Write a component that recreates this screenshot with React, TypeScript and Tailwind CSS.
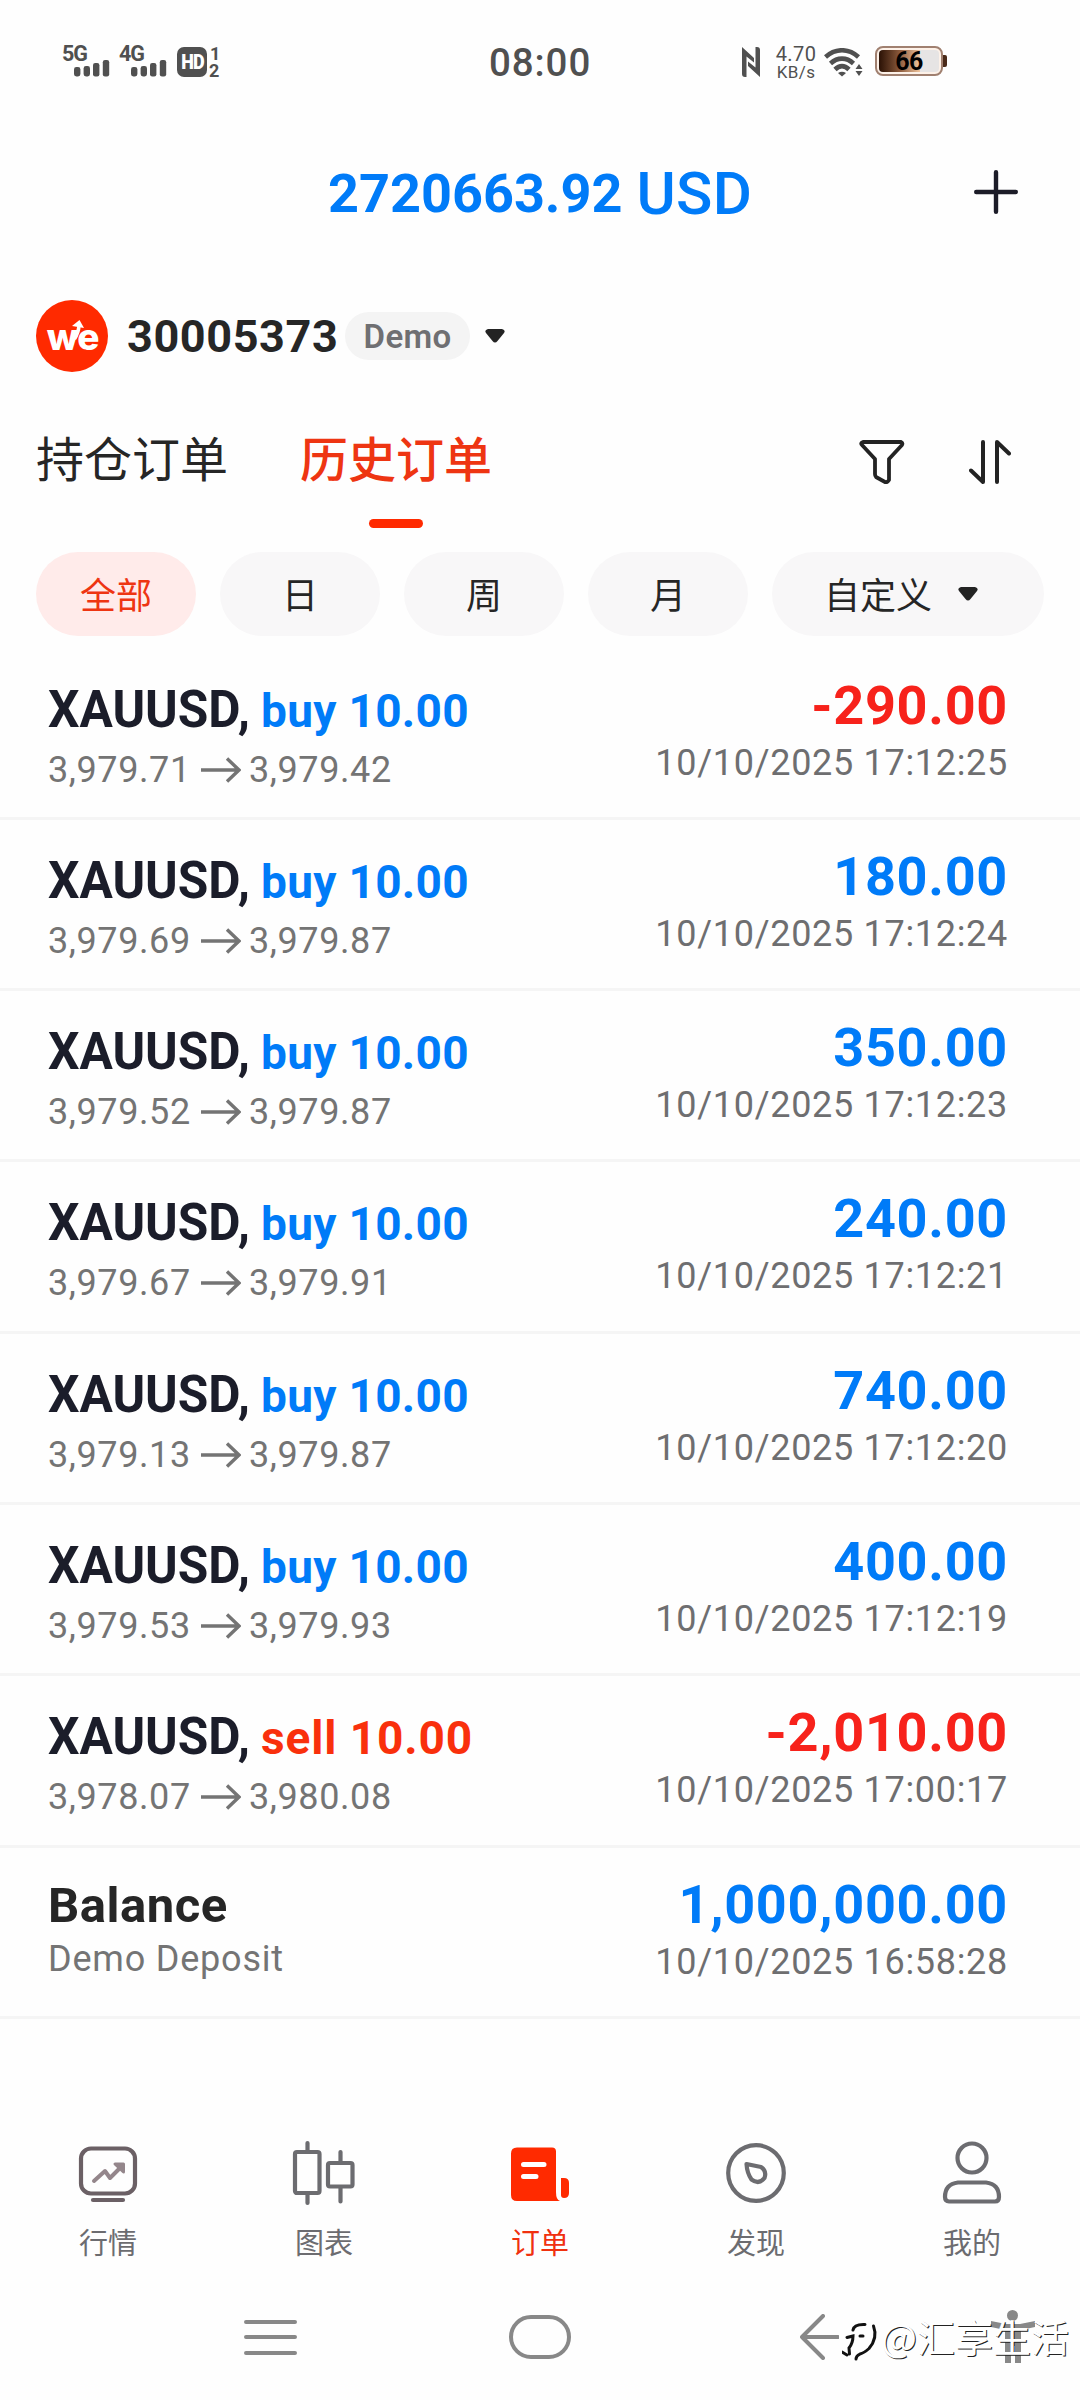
import type { ReactNode } from "react";

const latin = "font-[Roboto,'Noto_Sans_CJK_SC',sans-serif]";
const cjk = "font-['Noto_Sans_CJK_SC',sans-serif]";

type Order = {
  kind?: "buy" | "sell";
  from?: string;
  to?: string;
  profit: string;
  time: string;
};

const orders: Order[] = [
  { kind: "buy", from: "3,979.71", to: "3,979.42", profit: "-290.00", time: "10/10/2025 17:12:25" },
  { kind: "buy", from: "3,979.69", to: "3,979.87", profit: "180.00", time: "10/10/2025 17:12:24" },
  { kind: "buy", from: "3,979.52", to: "3,979.87", profit: "350.00", time: "10/10/2025 17:12:23" },
  { kind: "buy", from: "3,979.67", to: "3,979.91", profit: "240.00", time: "10/10/2025 17:12:21" },
  { kind: "buy", from: "3,979.13", to: "3,979.87", profit: "740.00", time: "10/10/2025 17:12:20" },
  { kind: "buy", from: "3,979.53", to: "3,979.93", profit: "400.00", time: "10/10/2025 17:12:19" },
  { kind: "sell", from: "3,978.07", to: "3,980.08", profit: "-2,010.00", time: "10/10/2025 17:00:17" },
  { profit: "1,000,000.00", time: "10/10/2025 16:58:28" },
];

function Signal({ label }: { label: string }) {
  return (
    <div className="flex w-[57px] flex-col">
      <span className="h-[15px] text-[21.5px] leading-[18px] font-bold tracking-[-1px]">{label}</span>
      <svg className="ml-[12px]" width="36" height="17" viewBox="0 0 36 17" fill="#505050">
        <rect x="0" y="7" width="6.4" height="9.5" rx="2.4" />
        <rect x="9.6" y="6" width="6.4" height="10.5" rx="2.4" />
        <rect x="19" y="3" width="6.4" height="13.5" rx="2.2" />
        <rect x="28.8" y="0" width="6.4" height="16.5" rx="2.2" />
      </svg>
    </div>
  );
}

function StatusBar() {
  return (
    <div className="flex h-[120px] items-start px-[62px] pt-[45px] text-[#505050]">
      <div className="flex w-[427px] items-start">
        <Signal label="5G" />
        <Signal label="4G" />
        <div className="mt-[2px] ml-[1px] flex h-[30px] w-[30px] items-center justify-center rounded-[7px] bg-[#505050] text-[20px] leading-none font-black tracking-[-1px] text-white">
          <span className="inline-block scale-x-90">HD</span>
        </div>
        <div className="ml-[2px] flex flex-col text-[18px] leading-[17px] font-bold">
          <span className="pl-[1px]">1</span>
          <span>2</span>
        </div>
      </div>
      <div className="mt-[-3px] text-[38.5px] leading-[42px] font-medium tracking-[0.9px]">08:00</div>
      <div className="ml-auto flex w-[338px] items-start">
        <svg className="mt-[2px] ml-[61px]" width="20" height="30" viewBox="0 0 20 30" fill="#505050">
          <path d="M1 0 13 11V15.500L5.500 9.500V30H4Q1 30 1 27Z" />
          <path d="M19 30 7 19V14.500L14.500 20.500V0H16Q19 0 19 3Z" />
        </svg>
        <div className="ml-[14px] flex w-[42px] flex-col items-center leading-[16px]">
          <span className="mt-[1px] text-[20px] tracking-[0.4px]">4.70</span>
          <span className="mt-[2px] text-[17px] tracking-[0.4px]">KB/s</span>
        </div>
        <svg className="mt-[3px] ml-[7px]" width="40" height="29" viewBox="0 0 40 29" fill="none" stroke="#505050" strokeWidth="4.600">
          <path d="M1.500 9C11.500 0 24.500 0 34.500 9" />
          <path d="M6.500 15.500C13.500 9 22.500 9 29.500 15.500" />
          <path d="M11 21.500C15.500 17 20.500 17 25 21.500" />
          <path d="M18 28.500 14 25Q18 22.500 22 25Z" fill="#505050" stroke="none" />
          <path d="M35 16 38.500 21H31.500ZM35 28 38.500 23H31.500Z" fill="#505050" stroke="none" />
        </svg>
        <div className="mt-[1px] ml-[11px] flex items-center">
          <div className="relative h-[30px] w-[68px] rounded-[8px] border-2 border-[#a08070] bg-[#fdf1e8] p-[2px]">
            <div className="flex h-full w-full overflow-hidden rounded-[4px] bg-[#e6e4e4]">
              <div className="w-[41px] bg-linear-to-r from-[#2b1206] via-[#8b5a3c] to-[#f1c69f]" />
            </div>
            <span className="absolute inset-0 flex items-center justify-center text-[25px] leading-none font-bold tracking-[-0.5px] text-black">66</span>
          </div>
          <div className="h-[12px] w-[4px] rounded-r-[2px] bg-[#4a2a1a]" />
        </div>
      </div>
    </div>
  );
}

function Header() {
  return (
    <header className="flex h-[144px] items-center justify-between pr-[62px] pl-[328px]">
      <div className="flex items-baseline text-[#007bf8]">
        <span className="text-[54px] leading-none font-bold">2720663.92</span>
        <span className="ml-[14px] translate-y-[2px] text-[60px] leading-none font-medium tracking-[0.3px]">USD</span>
      </div>
      <svg width="44" height="44" viewBox="0 0 44 44" stroke="#1c1c28" strokeWidth="4.400" strokeLinecap="round">
        <path d="M22 2.200V41.800M2.200 22H41.800" />
      </svg>
    </header>
  );
}

function Caret() {
  return (
    <svg width="20" height="14" viewBox="0 0 20 14" fill="#232323">
      <path d="M3 0H17Q21 1 19 4L12.500 12Q10 15 7.500 12L1 4Q-1 1 3 0Z" />
    </svg>
  );
}

function Account() {
  return (
    <div className="flex h-[72px] items-center pl-[36px]">
      <div className="relative flex h-[72px] w-[72px] items-center justify-center rounded-full bg-[#ff2a00]">
        <span className="mr-[-1px] text-[37px] leading-none font-extrabold tracking-[-1px] text-white font-[Inter,sans-serif]">we</span>
        <svg className="absolute top-[20px] left-[35px]" width="14" height="20" viewBox="0 0 14 20">
          <path d="M3.500 19Q7.500 13 8 6" stroke="#fff" strokeWidth="3.500" fill="none" />
          <path d="M1 6 8.500 0 13 8Z" fill="#fff" />
        </svg>
      </div>
      <span className="mt-[1px] ml-[19px] w-[218px] text-[45px] leading-none font-bold tracking-[0.6px] text-[#262626]">30005373</span>
      <div className="flex h-[48px] w-[125px] items-center justify-center rounded-full bg-[#f4f4f4] text-[33px] leading-none font-semibold tracking-[0.3px] text-[#6f6f72]">Demo</div>
      <div className="ml-[15px]"><Caret /></div>
    </div>
  );
}

function Tabs() {
  return (
    <nav className={`flex h-[120px] items-start pl-[36px] text-[48px] leading-[54px] ${cjk}`}>
      <div className="mt-[21px] text-[#262626]">持仓订单</div>
      <div className="mt-[21px] ml-[72px] flex flex-col items-center">
        <span className="font-medium text-[#ee3512]">历史订单</span>
        <span className="mt-[36px] h-[9px] w-[54px] rounded-full bg-[#ff2a00]" />
      </div>
      <svg className="mt-[32px] ml-[367px]" width="46" height="44" viewBox="0 0 46 44" fill="none" stroke="#232323" strokeWidth="3.800" strokeLinejoin="round">
        <path d="M4 2H42Q44 3 43 5L30 19V40Q28 43 26 42L17 37Q16 36 16 34V19L3 5Q1 3 4 2Z" />
      </svg>
      <svg className="mt-[32px] ml-[64px]" width="42" height="44" viewBox="0 0 42 44" fill="none" stroke="#232323" strokeWidth="4" strokeLinecap="round" strokeLinejoin="round">
        <path d="M14 2V42L2 30.500M28 42V2L40 13.500" />
      </svg>
    </nav>
  );
}

function Chips() {
  return (
    <div className={`flex h-[84px] gap-[24px] pl-[36px] text-[36px] leading-none text-[#262626] ${cjk}`}>
      <div className="flex w-[160px] items-center justify-center rounded-full bg-[#ffebea] pb-[2px] text-[#ee3512]">全部</div>
      <div className="flex w-[160px] items-center justify-center rounded-full bg-[#f8f7f8] pb-[2px]">日</div>
      <div className="flex w-[160px] items-center justify-center rounded-full bg-[#f8f7f8] pb-[2px]">周</div>
      <div className="flex w-[160px] items-center justify-center rounded-full bg-[#f8f7f8] pb-[2px]">月</div>
      <div className="flex w-[272px] items-center rounded-full bg-[#f8f7f8] pb-[2px] pl-[52px]">
        <span>自定义</span>
        <span className="mt-[2px] ml-[26px]"><Caret /></span>
      </div>
    </div>
  );
}

function OrderRow({ order }: { order: Order }) {
  const loss = order.profit.startsWith("-");
  return (
    <li className="flex h-[171.3px] justify-between border-b-3 border-[#f5f5f5] pr-[72px] pl-[48px]">
      {order.kind ? (
        <div className="pt-[30px]">
          <div className="flex h-[60px] items-baseline leading-[60px] font-bold">
            <span className="inline-block w-[213px] origin-left scale-x-[0.945] text-[52.5px] text-[#1b1d2a]">XAUUSD,</span>
            <span
              className={
                order.kind === "buy"
                  ? "text-[46px] tracking-[0.3px] text-[#007bf8]"
                  : "text-[46px] tracking-[0.9px] text-[#f9300c]"
              }
            >
              {order.kind} 10.00
            </span>
          </div>
          <div className="mt-[10px] flex h-[42px] items-center text-[36px] leading-[42px] tracking-[0.6px] text-[#747474]">
            <span className="w-[153px]">{order.from}</span>
            <svg width="40" height="26" viewBox="0 0 40 26" fill="none" stroke="#747474" strokeWidth="3.400">
              <path d="M0 13H38M26 1.500 38 13 26 24.500" />
            </svg>
            <span className="ml-[8px]">{order.to}</span>
          </div>
        </div>
      ) : (
        <div className="pt-[28px]">
          <div className="text-[49px] leading-[60px] font-bold tracking-[0.5px] text-[#262626]">Balance</div>
          <div className="mt-[2px] text-[36px] leading-[42px] tracking-[0.8px] text-[#747474]">Demo Deposit</div>
        </div>
      )}
      <div className="flex flex-col items-end pt-[27px]">
        <span className={`text-[54px] leading-[60px] font-bold tracking-[0.7px] ${loss ? "text-[#f7221b]" : "text-[#007bf8]"}`}>{order.profit}</span>
        <span className="mt-[6px] text-[36px] leading-[42px] tracking-[0.7px] text-[#6e6e70]">{order.time}</span>
      </div>
    </li>
  );
}

function TabItem({ label, active, children }: { label: string; active?: boolean; children: ReactNode }) {
  return (
    <div className={`flex w-[216px] flex-col items-center ${active ? "text-[#f0310f]" : "text-[#6c6c70]"}`}>
      <svg width="66" height="66" viewBox="0 0 66 66" fill="none" stroke="#6c6c70" strokeWidth="4.200" strokeLinecap="round" strokeLinejoin="round">
        {children}
      </svg>
      <span className={`mt-[17px] text-[29px] leading-[36px] ${cjk}`}>{label}</span>
    </div>
  );
}

function TabBar() {
  return (
    <div className="flex h-[150px]">
      <TabItem label="行情">
        <g stroke="#6b6065">
          <rect x="6" y="8.500" width="54" height="45" rx="10" />
          <path d="M18 60H48" />
        </g>
        <path d="M19 41 30 31 35 38 46 27" stroke="#94868b" strokeWidth="4" />
        <path d="M40 24H48.500V32Z" fill="#94868b" stroke="#94868b" strokeWidth="3" />
      </TabItem>
      <TabItem label="图表">
        <rect x="4" y="12" width="24.500" height="41" rx="2" />
        <path d="M16.500 3V12M16.500 53V63M49.500 12V23M49.500 47V61.500" />
        <rect x="37" y="23" width="24.500" height="23.500" rx="2" />
      </TabItem>
      <TabItem label="订单" active>
        <path d="M10 7.500H45Q49 7.500 49 11.500V52Q49 60 53 61H10Q4 61 4 55V13.500Q4 7.500 10 7.500Z" fill="#ff2a00" stroke="none" />
        <path d="M54 38H57Q62 38 62 43V53Q62 58 57 58Q54 58 54 55Z" fill="#ff2a00" stroke="none" />
        <path d="M16.500 24.500H37M16.500 36.500H29" stroke="#fff" strokeWidth="5" />
      </TabItem>
      <TabItem label="发现">
        <circle cx="33" cy="33" r="27.800" />
        <path d="M23.500 24 38 27Q44 31 41.500 38Q36 45 28.500 39.500Q24 33 23.500 24Z" />
      </TabItem>
      <TabItem label="我的">
        <circle cx="33" cy="18" r="14.500" />
        <path d="M19 42.500H47Q60 44 60 57Q60 61.500 56 61.500H10Q6 61.500 6 57Q6 44 19 42.500Z" />
      </TabItem>
    </div>
  );
}

function SystemNav() {
  return (
    <div className="relative flex h-[54px] items-center pl-[244px]">
      <svg width="53" height="36" viewBox="0 0 53 36" stroke="#888" strokeWidth="4" strokeLinecap="round">
        <path d="M2 3H51M2 18H51M2 34H51" />
      </svg>
      <div className="ml-[212px] h-[44px] w-[62px] rounded-full border-4 border-[#888]" />
      <svg className="ml-[229px]" width="39" height="46" viewBox="0 0 39 46" fill="none" stroke="#888" strokeWidth="4" strokeLinecap="round" strokeLinejoin="round">
        <path d="M23 2 2 23 23 44M2 23H38" />
      </svg>
      <svg className="ml-[151px]" width="46" height="54" viewBox="0 0 46 54" fill="#888">
        <circle cx="22.500" cy="5.500" r="5.500" />
        <path d="M1 11 16 14H30L45 11V17L31 20V53H25V36H21V53H15V20L1 17Z" />
      </svg>
      <div className={`absolute top-[1px] left-[842px] flex h-[50px] items-center text-[38px] leading-none whitespace-nowrap text-white [text-shadow:1px_1px_0.5px_#222] ${cjk}`}>
        <svg className="mt-[2px]" width="39" height="50" viewBox="0 0 39 50" fill="none" stroke="#111" strokeWidth="3" strokeLinecap="round">
          <path d="M31.500 14Q36 26 27 36.500Q22 41 18 42Q14 44 14 47" />
          <path d="M11 18Q12 12 23 12.500M5 25.500 11 24Q11 31 7 36L7.500 42M18 24H21M0 40 5 43" />
        </svg>
        <span>@汇享生活</span>
      </div>
    </div>
  );
}

export default function App() {
  return (
    <main className={`h-[2400px] w-[1080px] overflow-hidden bg-[#fefefe] ${latin}`}>
      <StatusBar />
      <Header />
      <div className="h-[36px]" />
      <Account />
      <div className="h-[36px]" />
      <Tabs />
      <div className="h-[24px]" />
      <Chips />
      <div className="h-[12.500px]" />
      <ul>
        {orders.map((order) => (
          <OrderRow key={order.time} order={order} />
        ))}
      </ul>
      <div className="h-[121px]" />
      <TabBar />
      <div className="h-[20px]" />
      <SystemNav />
    </main>
  );
}
